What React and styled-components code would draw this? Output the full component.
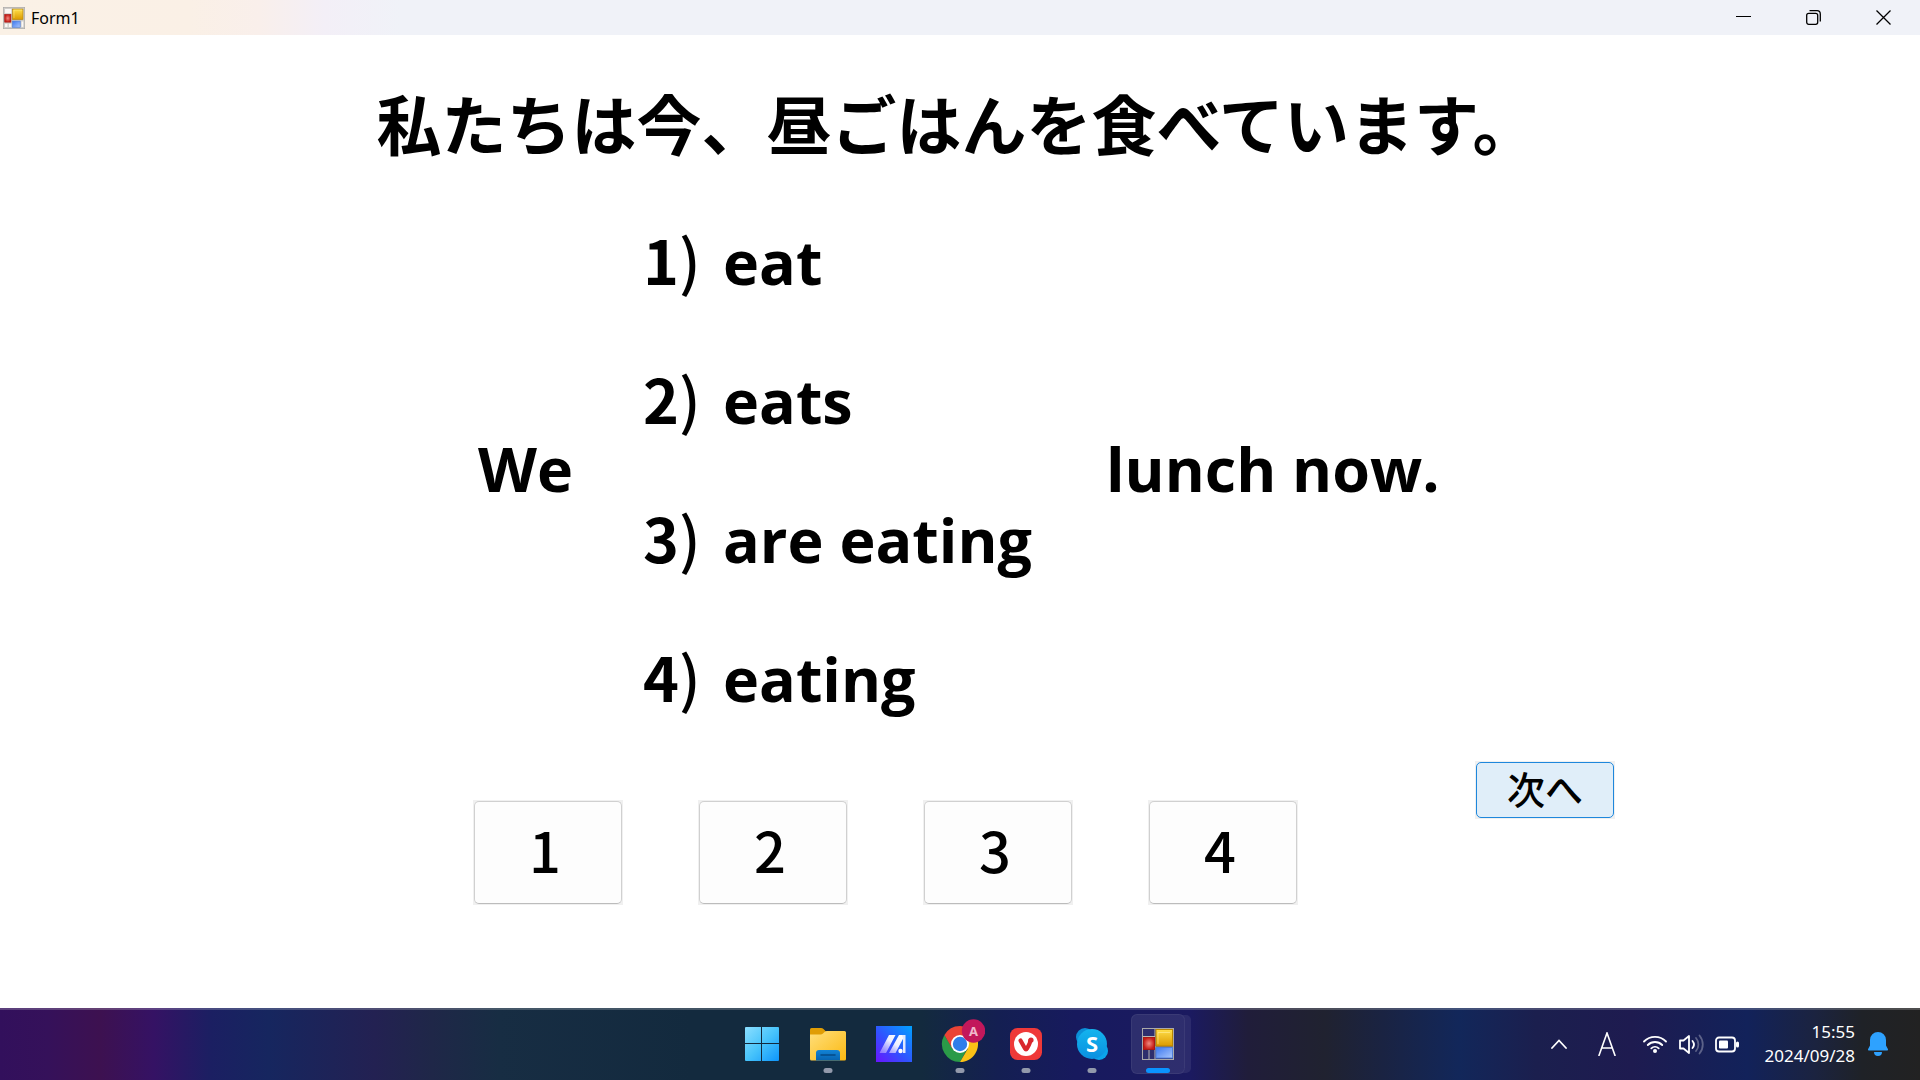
import React from "react";
import styled, { createGlobalStyle } from "styled-components";

const GlobalStyle = createGlobalStyle`
  * { box-sizing: border-box; }
  body { margin: 0; background: #fff; }
  button { font: inherit; color: inherit; cursor: pointer; }
`;

const jp = `"Noto Sans CJK JP", sans-serif`;
const latin = `"Open Sans", "Noto Sans CJK JP", sans-serif`;
const ui = `"Noto Sans", "Open Sans", sans-serif`;

const Screen = styled.div`
  min-height: 100vh;
  display: flex;
  flex-direction: column;
  color: #000;
  font-family: ${jp};
`;

const TitleBar = styled.header`
  height: 35px;
  display: flex;
  align-items: center;
  padding: 0 2px 0 3px;
  background: linear-gradient(90deg, #faf1e6 0, #faf0e6 190px, #f9efeb 260px, #f3eff7 325px, #f0f2f8 400px);
`;

const WindowTitle = styled.h1`
  flex: 1;
  margin: 0 0 0 6px;
  font: 400 16px/24px ${ui};
`;

const WindowButton = styled.button`
  width: 70px;
  height: 35px;
  padding: 0;
  border: 0;
  background: none;
  display: grid;
  place-items: center;
`;

const Form = styled.main`
  flex: 1;
  display: flex;
  flex-direction: column;
  align-items: center;
  padding-top: 39px;
`;

const Prompt = styled.h2`
  margin: 0 0 41px;
  padding-right: 6px;
  font-size: 65px;
  line-height: 96px;
  font-weight: 700;
  white-space: nowrap;
`;

const Question = styled.section`
  display: grid;
  grid-template-columns: 165px 463px 338px;
  align-items: center;
  padding-left: 2px;
  font-family: ${latin};
  font-size: 61px;
  line-height: 96px;
  font-weight: 700;
  white-space: nowrap;
`;

const Phrase = styled.span``;

const Options = styled.ol`
  list-style: none;
  margin: 0;
  padding: 0;
  display: grid;
  gap: 40px;
`;

const Option = styled.li`
  display: grid;
  grid-template-columns: 80px auto;
  align-items: baseline;
`;

const Marker = styled.span`
  font-family: ${jp};
  font-size: 61px;
`;

const Paren = styled.span`
  font-weight: 500;
`;

const Actions = styled.div`
  display: flex;
  align-items: flex-start;
  gap: 177px;
  margin-top: 34px;
  padding-left: 168px;
`;

const Answers = styled.div`
  display: flex;
  gap: 75px;
  padding-top: 39px;
`;

const ButtonFrame = styled.span`
  display: block;
  padding: 1px;
  background: #f0f0f0;
`;

const FormButton = styled.button`
  display: block;
  width: ${(p) => (p.$primary ? 138 : 148)}px;
  height: ${(p) => (p.$primary ? 56 : 103)}px;
  padding: ${(p) => (p.$primary ? "0 0 4px" : "0 6px 8px 0")};
  border: ${(p) => (p.$primary ? "1px solid #1e87dc" : "1px solid #d0d0d0")};
  border-bottom-color: ${(p) => (p.$primary ? "#1e87dc" : "#bcbcbc")};
  border-radius: 5px;
  background: ${(p) => (p.$primary ? "#e0eef9" : "#fdfdfd")};
  font: 500 ${(p) => (p.$primary ? 38 : 56)}px/1 ${jp};
`;

const TaskBar = styled.footer`
  height: 72px;
  display: grid;
  grid-template-columns: 1fr auto 1fr;
  align-items: stretch;
  border-top: 2px solid rgba(255, 255, 255, 0.2);
  color: #fff;
  background: linear-gradient(
    90deg,
    #32105c 0%, #35115a 2.5%, #3d1150 5.2%, #351264 8%, #1b1f62 11%, #16265f 14%,
    #232152 19.5%, #1f2748 22.5%, #172d43 26%, #132a3e 36%, #132a3e 48%, #141f52 52%,
    #171a5e 56%, #1b1a60 62%, #201d3a 65%, #202230 69%, #1a2342 72%, #12275a 76%,
    #1b1f4e 80%, #1e1b50 85%, #12225a 91%, #1b2340 94.5%, #1f2227 97%, #222 100%
  ) border-box;
`;

const Apps = styled.nav`
  grid-column: 2;
  display: flex;
`;

const AppButton = styled.button`
  position: relative;
  width: 66px;
  padding: 4px 0 0;
  border: 0;
  background: none;
  display: flex;
  justify-content: center;
`;

const AppTile = styled.span`
  width: 54px;
  height: 60px;
  padding-top: 12px;
  display: flex;
  justify-content: center;
  border-radius: 6px;
  background: ${(p) => (p.$active ? "rgba(255,255,255,0.09)" : "none")};
  box-shadow: ${(p) =>
    p.$active
      ? "inset 0 0 0 1px rgba(255,255,255,0.06), 7px 0 0 -1px rgba(255,255,255,0.08)"
      : "none"};
`;

const Indicator = styled.span`
  position: absolute;
  left: 50%;
  bottom: 7px;
  width: ${(p) => (p.$active ? 24 : 9)}px;
  height: 5px;
  border-radius: 3px;
  background: ${(p) => (p.$active ? "#0a93ff" : "#9299ab")};
  transform: translateX(-50%);
`;

const Tray = styled.div`
  display: flex;
  align-items: center;
  justify-content: flex-end;
  padding: 0 31px 2px 0;
`;

const TrayButton = styled.button`
  padding: 0;
  border: 0;
  background: none;
  display: flex;
  align-items: center;
  margin-right: ${(p) => p.$gap || 0}px;
`;

const Clock = styled.time`
  margin: 0 12px 0 26px;
  text-align: right;
  font: 400 17px/24px ${ui};
`;

const FormsIcon = ({ size, plate }) => (
  <svg width={size} height={size} viewBox="0 0 32 32" aria-hidden="true">
    <defs>
      <linearGradient id="fy" x1="0" y1="0" x2="0" y2="1"><stop offset="0" stopColor="#ffdf4a" /><stop offset="1" stopColor="#dc9a00" /></linearGradient>
      <linearGradient id="fb" x1="0" y1="0" x2="1" y2="1"><stop offset="0" stopColor="#3c78f0" /><stop offset="1" stopColor="#a9c6fb" /></linearGradient>
      <radialGradient id="fr"><stop offset="0" stopColor="#f08a80" /><stop offset="1" stopColor="#c61b16" /></radialGradient>
    </defs>
    <rect x=".5" y=".5" width="31" height="31" fill={plate || "none"} stroke="#aaa9a8" />
    {!plate && <path d="M1 8.500h12M13 1v30M7 22v9M1 21.500h12M13 19h18" stroke="#b9b7b5" fill="none" />}
    {plate && <path d="M3 3h9v6H3zM3 24.500h3.500V29H3zM8.500 24.500H12V29H8.500z" fill="#fbf8f5" />}
    <rect x={plate ? 2.500 : 1.500} y={plate ? 11 : 9.500} width={plate ? 9 : 11} height={plate ? 11 : 12} fill="url(#fr)" stroke="#a81813" />
    <rect x="14" y={plate ? 3 : 1.500} width={plate ? 15 : 16.500} height={plate ? 15 : 16.500} fill="url(#fy)" stroke="#b98500" />
    <path d="M16 16V4.500h12" stroke="#fff0a0" opacity=".6" fill="none" />
    <rect x="14" y={plate ? 20.500 : 19.500} width={plate ? 11 : 16.500} height={plate ? 9 : 10.500} fill="url(#fb)" stroke="#4f7ed8" />
    {plate && <path d="M27 21h2.500v8H27z" fill="#fbf8f5" />}
  </svg>
);

const StartIcon = () => (
  <svg width="36" height="36" viewBox="0 0 36 36" aria-hidden="true">
    <defs><linearGradient id="st" x1="0" y1="0" x2="36" y2="36" gradientUnits="userSpaceOnUse"><stop offset="0" stopColor="#8fe0ff" /><stop offset=".5" stopColor="#48c4fb" /><stop offset="1" stopColor="#0a92fb" /></linearGradient></defs>
    <path fill="url(#st)" d="M2 1h15v16H1V2a1 1 0 0 1 1-1zM18 1h16a1 1 0 0 1 1 1v15H18zM1 18h16v17H2a1 1 0 0 1-1-1zM18 18h17v16a1 1 0 0 1-1 1H18z" />
  </svg>
);

const FolderIcon = () => (
  <svg width="36" height="36" viewBox="0 0 36 36" aria-hidden="true">
    <defs>
      <linearGradient id="fo" x1="0" y1="0" x2="1" y2="1"><stop offset="0" stopColor="#ffdf7c" /><stop offset="1" stopColor="#fcb911" /></linearGradient>
      <linearGradient id="fp" x1="0" y1="0" x2="0" y2="1"><stop offset="0" stopColor="#1283d6" /><stop offset="1" stopColor="#0763b0" /></linearGradient>
    </defs>
    <path fill="#e09d05" d="M0 3.500A1.500 1.500 0 0 1 1.500 2H11q1.500 0 2.500 1l2.500 2.500L12 10H0z" />
    <path fill="url(#fo)" d="M0 8.500h10.500q1.500 0 2.500-1l1.500-1.500q1-1 2.500-1H34.500A1.500 1.500 0 0 1 36 6.500V33a1.500 1.500 0 0 1-1.500 1.500h-33A1.500 1.500 0 0 1 0 33z" />
    <path fill="url(#fp)" d="M6 34.500V27a3 3 0 0 1 3-3h18a3 3 0 0 1 3 3v7.500z" />
    <path stroke="#044a86" strokeWidth="1.500" strokeLinecap="round" d="M11 29h14" />
  </svg>
);

const MyAsusIcon = () => (
  <svg width="36" height="36" viewBox="0 0 36 36" aria-hidden="true">
    <defs>
      <linearGradient id="ma" x1="0" y1="1" x2="1" y2="0"><stop offset="0" stopColor="#6a14ff" /><stop offset=".45" stopColor="#3152ff" /><stop offset="1" stopColor="#00a2ff" /></linearGradient>
      <linearGradient id="mw" x1="1" y1="0" x2="0" y2="1"><stop offset="0" stopColor="#fff" /><stop offset=".45" stopColor="#eef0ff" /><stop offset="1" stopColor="#b7a4ff" stopOpacity=".55" /></linearGradient>
    </defs>
    <path fill="url(#ma)" d="M0 0h36v36H0z" />
    <path fill="url(#mw)" d="M13 9h6.500L10 27H3.500zM23 9h6L19.500 27H13z" />
    <path fill="#dfe8ff" d="M26 9h3.500v18H27V12z" />
    <circle cx="24.500" cy="25" r="2.200" fill="#fff" />
  </svg>
);

const AvatarLetter = styled.text`
  font: 700 13px ${ui};
`;

const BadgedIcon = styled.svg`
  flex: none;
  margin-top: -10px;
`;

const ChromeIcon = () => (
  <BadgedIcon width="50" height="46" viewBox="-7 -10 50 46" aria-hidden="true">
    <path fill="#2b9a48" d="m10.500 22.500 7.500 4 7.500-4L18 36A18 18 0 0 1 2.400 9z" />
    <path fill="#fbc116" d="M18 9.500h15.900A18 18 0 0 1 18 36l7.600-13z" />
    <path fill="#ea4335" d="M18 9.500h15.900A18 18 0 0 0 2.400 9l7.800 13.500z" />
    <circle cx="18" cy="18" r="9" fill="#fff" />
    <circle cx="18" cy="18" r="7.200" fill="#2f7de9" />
    <circle cx="31.500" cy="5" r="11.700" fill="#c2185b" />
    <AvatarLetter x="31.500" y="10" textAnchor="middle" fill="#f0b8cc">A</AvatarLetter>
  </BadgedIcon>
);

const VivaldiIcon = () => (
  <svg width="36" height="36" viewBox="0 0 36 36" aria-hidden="true">
    <rect x="2" y="2" width="32" height="32" rx="7.500" fill="#ef3939" />
    <circle cx="18" cy="18" r="12" fill="#fff" />
    <path d="M12.500 14.500 17 22.500q1 1.800 2 0l2-3.800q1.200-2.200 1.200-4" stroke="#d9282f" strokeWidth="4.200" strokeLinecap="round" fill="none" />
    <circle cx="23" cy="14" r="2.600" fill="#d9282f" />
  </svg>
);

const SkypeLetter = styled.text`
  font: 700 22px ${ui};
`;

const SkypeIcon = () => (
  <svg width="36" height="36" viewBox="0 0 36 36" aria-hidden="true">
    <defs><linearGradient id="sk" x1="0" y1="0" x2="0" y2="1"><stop offset="0" stopColor="#14b4ee" /><stop offset="1" stopColor="#0a90e0" /></linearGradient></defs>
    <circle cx="11" cy="11" r="9" fill="#0b8fd8" />
    <circle cx="25" cy="25" r="9" fill="#0ba4ea" />
    <circle cx="18" cy="18" r="15" fill="url(#sk)" />
    <SkypeLetter x="18" y="26" textAnchor="middle" fill="#fff">S</SkypeLetter>
  </svg>
);

const BrandForms = () => (
  <svg width="36" height="36" viewBox="0 0 36 36" aria-hidden="true">
    <svg x="2" y="2" width="32" height="32"><FormsIcon size={32} /></svg>
  </svg>
);

const apps = [
  { name: "スタート", Icon: StartIcon },
  { name: "エクスプローラー", Icon: FolderIcon, open: true },
  { name: "MyASUS", Icon: MyAsusIcon },
  { name: "Google Chrome", Icon: ChromeIcon, open: true },
  { name: "Vivaldi", Icon: VivaldiIcon, open: true },
  { name: "Skype", Icon: SkypeIcon, open: true },
  { name: "Form1", Icon: BrandForms, open: true, active: true },
];

const options = ["eat", "eats", "are eating", "eating"];

export default function App() {
  return (
    <Screen>
      <GlobalStyle />
      <TitleBar>
        <FormsIcon size={22} plate="#cfccc9" />
        <WindowTitle>Form1</WindowTitle>
        <WindowButton aria-label="最小化">
          <svg width="15" height="15" viewBox="0 0 15 15"><path d="M0 6.500h15" stroke="#000" /></svg>
        </WindowButton>
        <WindowButton aria-label="元に戻す">
          <svg width="15" height="15" viewBox="0 0 15 15" fill="none" stroke="#000" strokeWidth="1.300"><rect x=".7" y="3.300" width="11" height="11" rx="2" /><path d="M3.500.7H11a3.300 3.300 0 0 1 3.300 3.300v7.500" /></svg>
        </WindowButton>
        <WindowButton aria-label="閉じる">
          <svg width="15" height="15" viewBox="0 0 15 15" stroke="#000" strokeWidth="1.300"><path d="m.5.5 14 14M14.500.5l-14 14" /></svg>
        </WindowButton>
      </TitleBar>

      <Form lang="ja">
        <Prompt>私たちは今、昼ごはんを食べています。</Prompt>
        <Question>
          <Phrase>We</Phrase>
          <Options>
            {options.map((text, i) => (
              <Option key={text}>
                <Marker>{i + 1}<Paren>)</Paren></Marker>
                <span>{text}</span>
              </Option>
            ))}
          </Options>
          <Phrase>lunch now.</Phrase>
        </Question>
        <Actions>
          <Answers>
            {options.map((text, i) => (
              <ButtonFrame key={text}>
                <FormButton>{i + 1}</FormButton>
              </ButtonFrame>
            ))}
          </Answers>
          <ButtonFrame>
            <FormButton $primary>次へ</FormButton>
          </ButtonFrame>
        </Actions>
      </Form>

      <TaskBar>
        <Apps aria-label="タスクバー">
          {apps.map(({ name, Icon, open, active }) => (
            <AppButton key={name} aria-label={name}>
              <AppTile $active={active}><Icon /></AppTile>
              {open && <Indicator $active={active} />}
            </AppButton>
          ))}
        </Apps>
        <Tray>
          <TrayButton $gap={31} aria-label="隠れているインジケーター">
            <svg width="16" height="10" viewBox="0 0 16 10" fill="none" stroke="#fff" strokeWidth="1.800" strokeLinecap="round"><path d="m1 9 7-7.500L15 9" /></svg>
          </TrayButton>
          <TrayButton $gap={27} aria-label="入力モード">
            <svg width="18" height="24" viewBox="0 0 18 24" fill="none" stroke="#fff" strokeWidth="1.600"><path d="M.8 24 9 1l8.200 23M3.800 16h10.400" /></svg>
          </TrayButton>
          <TrayButton aria-label="ネットワーク、音量、バッテリー">
            <svg width="96" height="22" viewBox="0 0 96 22" fill="none" stroke="#fff" strokeWidth="1.800" strokeLinecap="round">
              <path d="M1 8.500a15.500 15.500 0 0 1 22 0M4.800 12a10.200 10.200 0 0 1 14.400 0M8.300 15.300a5.300 5.300 0 0 1 7.400 0" />
              <circle cx="12" cy="18" r="2" fill="#fff" stroke="none" />
              <path d="M37 7.500h3.500L46 3v17l-5.500-4.500H37z" strokeLinejoin="round" />
              <path d="M49.500 8a5.500 5.500 0 0 1 0 7" />
              <path d="M53 5a10 10 0 0 1 0 13M56.500 2.500a14 14 0 0 1 0 18" opacity=".3" />
              <rect x="73" y="4.500" width="19" height="14" rx="3" />
              <rect x="76" y="7.500" width="9" height="8" rx="1" fill="#fff" stroke="none" />
              <path d="M94.500 10v3" strokeWidth="3" />
            </svg>
          </TrayButton>
          <Clock>15:55<br />2024/09/28</Clock>
          <TrayButton aria-label="通知">
            <svg width="22" height="24" viewBox="0 0 22 24" fill="#2ea2ff"><path d="M11 0a8 8 0 0 1 8 8v5.500l2 3.700q.4 1.300-1 1.300H2q-1.400 0-1-1.300l2-3.700V8a8 8 0 0 1 8-8zM7 20h8a4 4 0 0 1-8 0z" /></svg>
          </TrayButton>
        </Tray>
      </TaskBar>
    </Screen>
  );
}
